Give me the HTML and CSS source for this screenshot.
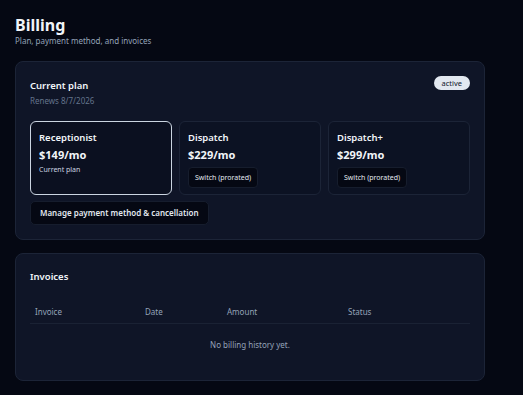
FILE: index.html
```html
<!DOCTYPE html>
<html lang="en">
<head>
    <meta charset="UTF-8">
    <meta name="viewport" content="width=device-width, initial-scale=1.0">
    <title>Billing</title>
    <link rel="stylesheet" href="styles.css">
</head>
<body>
    <div class="page">
        <header class="page-head">
            <h1>Billing</h1>
            <p>Plan, payment method, and invoices</p>
        </header>

        <section class="card">
            <div class="card-head">
                <div>
                    <h2>Current plan</h2>
                    <div class="renews">Renews 8/7/2026</div>
                </div>
                <span class="badge">active</span>
            </div>
            <div class="plans">
                <div class="plan selected">
                    <div class="plan-name">Receptionist</div>
                    <div class="plan-price">$149/mo</div>
                    <div class="plan-note">Current plan</div>
                </div>
                <div class="plan">
                    <div class="plan-name">Dispatch</div>
                    <div class="plan-price">$229/mo</div>
                    <button class="btn btn-small">Switch (prorated)</button>
                </div>
                <div class="plan">
                    <div class="plan-name">Dispatch+</div>
                    <div class="plan-price">$299/mo</div>
                    <button class="btn btn-small">Switch (prorated)</button>
                </div>
            </div>
            <button class="btn btn-manage">Manage payment method &amp; cancellation</button>
        </section>

        <section class="card invoices">
            <h2>Invoices</h2>
            <table class="table">
                <thead>
                    <tr>
                        <th class="col-invoice">Invoice</th>
                        <th class="col-date">Date</th>
                        <th class="col-amount">Amount</th>
                        <th>Status</th>
                    </tr>
                </thead>
                <tbody>
                    <tr>
                        <td colspan="4" class="empty">No billing history yet.</td>
                    </tr>
                </tbody>
            </table>
        </section>
    </div>
</body>
</html>
```

FILE: styles.css
```css
body {
    margin: 0;
    background-color: #050813;
    color: #f1f5f9;
    font-family: "Noto Sans", "Open Sans", sans-serif;
}
.page {
    width: 470px;
    padding: 15px;
}
.page-head h1 {
    margin: 0;
    font-size: 16px;
    line-height: 20px;
    font-weight: 700;
}
.page-head p {
    margin: 0;
    font-size: 8px;
    line-height: 12px;
    color: #94a3b8;
}
.card {
    margin-top: 14px;
    background-color: #0f1527;
    border: 1px solid #1c2437;
    border-radius: 8px;
    padding: 16px 14px 14px;
}
.card h2 {
    margin: 0;
    font-size: 9.5px;
    line-height: 16px;
    font-weight: 600;
}
.card-head {
    display: flex;
    justify-content: space-between;
    align-items: flex-start;
}
.badge {
    margin-top: -2px;
    padding: 1px 8px;
    border-radius: 7px;
    background-color: #e2e8f0;
    color: #0f172a;
    font-size: 7.5px;
    line-height: 12px;
}
.renews {
    margin-top: 1px;
    font-size: 8px;
    line-height: 12px;
    color: #64748b;
}
.plans {
    display: grid;
    grid-template-columns: repeat(3, 1fr);
    gap: 7px;
    margin-top: 14px;
}
.plan {
    height: 74px;
    box-sizing: border-box;
    padding: 9px 8px 8px;
    border: 1px solid #1c2437;
    border-radius: 6px;
    background-color: #0c1223;
}
.plan.selected {
    border: 1.5px solid #cbd5e1;
    background-color: #0b1020;
}
.plan-name {
    font-size: 9.5px;
    line-height: 14px;
    font-weight: 600;
}
.plan-price {
    margin-top: 2px;
    font-size: 11px;
    line-height: 16px;
    font-weight: 700;
}
.plan-note {
    margin-top: 2px;
    font-size: 7px;
    line-height: 10px;
    color: #cbd5e1;
}
.btn {
    display: inline-block;
    background-color: #050813;
    color: #e2e8f0;
    border: 1px solid #161d2d;
    font-family: inherit;
    cursor: pointer;
}
.btn-small {
    margin-top: 4px;
    padding: 4px 6px;
    border-radius: 4px;
    font-size: 7px;
    line-height: 11px;
}
.btn-manage {
    margin-top: 6px;
    padding: 5px 9px;
    border-radius: 5px;
    font-size: 8px;
    line-height: 12px;
    font-weight: 600;
}
.invoices {
    margin-top: 13px;
    padding-top: 15px;
    padding-bottom: 15px;
}
.table {
    width: 100%;
    margin-top: 16px;
    border-collapse: collapse;
    font-size: 8px;
}
.table th {
    text-align: left;
    font-weight: 400;
    color: #94a3b8;
    padding: 5px 5px 5px;
    line-height: 12px;
    border-bottom: 1px solid #1a2234;
}
.col-invoice {
    width: 100px;
}
.col-date {
    width: 72px;
}
.col-amount {
    width: 111px;
}
.empty {
    text-align: center;
    color: #94a3b8;
    padding: 15px 0 14px;
    line-height: 12px;
}
```
